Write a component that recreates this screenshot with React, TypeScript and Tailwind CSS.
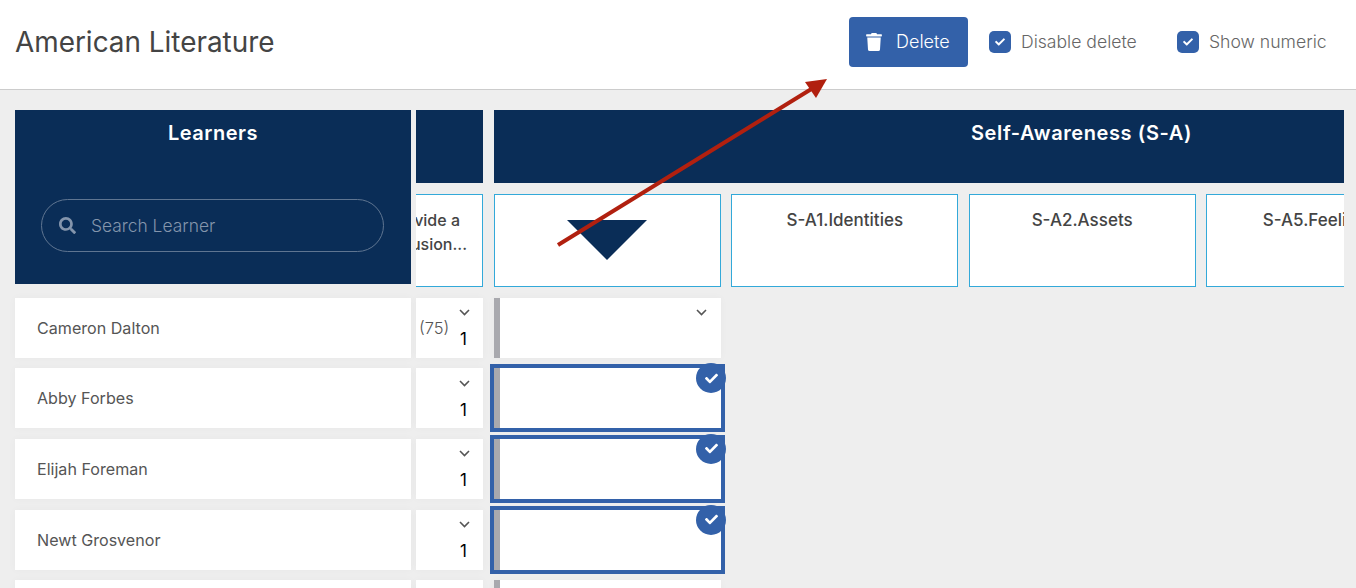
import { FaCheck, FaSearch, FaTrash } from 'react-icons/fa';

const learners = [
  { name: 'Cameron Dalton', score: '(75)', selected: false },
  { name: 'Abby Forbes', score: '', selected: true },
  { name: 'Elijah Foreman', score: '', selected: true },
  { name: 'Newt Grosvenor', score: '', selected: true },
  { name: '', score: '', selected: false },
];

const standards = ['S-A1.Identities', 'S-A2.Assets', 'S-A5.Feelings'];

function Chevron() {
  return (
    <svg width="11" height="7" viewBox="0 0 11 7" fill="none" stroke="#555" strokeWidth="1.6">
      <path d="M1 1l4.5 4.5L10 1" />
    </svg>
  );
}

function HeaderCheckbox({ label }: { label: string }) {
  return (
    <label className="mt-[1px] flex items-center gap-[10px]">
      <span className="flex h-[22px] w-[22px] items-center justify-center rounded-[5px] bg-[#3361a9] text-white">
        <FaCheck className="h-[10px] w-[10px]" />
      </span>
      <span className="w-[117px] text-[17.6px] font-light whitespace-nowrap text-[#666]">{label}</span>
    </label>
  );
}

export default function App() {
  return (
    <div className="relative h-[588px] w-[1356px] overflow-hidden bg-[#eeeeee] font-['Inter',sans-serif]">
      <header className="flex h-[90px] items-center justify-between border-b border-[#cccccc] bg-white pr-[30px] pb-[6px] pl-[15px]">
        <h1 className="mt-[2px] text-[27.9px] font-normal text-[#444]">American Literature</h1>
        <div className="flex items-center">
          <button className="flex h-[50px] w-[119px] items-center gap-[14px] rounded-[4px] bg-[#3361a9] pl-[17px] text-[18px] font-light text-white">
            <FaTrash className="h-[18px] w-[16px]" />
            Delete
          </button>
          <div className="ml-[21px] flex items-center gap-[39px]">
            <HeaderCheckbox label="Disable delete" />
            <HeaderCheckbox label="Show numeric" />
          </div>
        </div>
      </header>

      <div className="flex pt-5 pr-3 pl-[15px]">
        {/* Learners column */}
        <div className="w-[396px] shrink-0">
          <div className="h-[174px] bg-[#0a2d57] pt-[10px] text-center">
            <h2 className="text-[20px] leading-[27px] font-semibold tracking-[0.5px] text-white">Learners</h2>
            <div className="mt-[52px] ml-[26px] flex h-[53px] w-[343px] items-center gap-[15px] rounded-full border border-[#5f7591] pl-[17px] text-[#8495ac]">
              <FaSearch className="h-[17px] w-[17px]" />
              <span className="mt-[1px] text-[17.4px] font-light">Search Learner</span>
            </div>
          </div>
          <div className="mt-[13.8px] flex flex-col gap-[10.6px]">
            {learners.map((l, i) => (
              <div key={i} className="flex h-[60px] items-center bg-white pl-[22px] text-[16.1px] text-[#555] shadow-[0_0_8px_rgba(0,0,0,0.03)]">
                {l.name}
              </div>
            ))}
          </div>
        </div>

        {/* Clipped column */}
        <div className="ml-[5px] w-[67px] shrink-0">
          <div className="h-[73px] bg-[#0a2d57]" />
          <div className="mt-[11px] flex h-[93px] flex-col items-end overflow-hidden border border-l-0 border-[#33a9d9] bg-white pt-[13px] pr-[15px] text-[16px] leading-6 font-medium whitespace-nowrap text-[#444]">
            <span className="mr-[7px]">Provide a</span>
            <span>conclusion...</span>
          </div>
          <div className="mt-[10.8px] flex flex-col gap-[10.6px]">
            {learners.map((l, i) => (
              <div key={i} className="flex h-[60px] justify-between bg-white pr-[13px] pl-[3px] shadow-[0_0_8px_rgba(0,0,0,0.03)]">
                <span className="pt-[18px] text-[16.5px] font-light text-[#555]">{l.score}</span>
                {l.name && (
                  <div className="flex flex-col items-end pt-[11.5px]">
                    <Chevron />
                    <span className="mt-[11px] mr-[3px] text-[17px] leading-6 text-black">1</span>
                  </div>
                )}
              </div>
            ))}
          </div>
        </div>

        {/* Self-Awareness */}
        <div className="ml-[11px] min-w-0 flex-1">
          <div className="h-[73px] overflow-hidden bg-[#0a2d57]">
            <h2 className="w-[1175px] pt-[10px] text-center text-[20px] leading-[27px] font-semibold tracking-[0.6px] text-white">
              Self-Awareness (S-A)
            </h2>
          </div>
          <div className="mt-[11px] flex gap-[10.33px] overflow-hidden">
            <div className="flex h-[93px] w-[227px] shrink-0 justify-center border border-[#33a9d9] bg-white pt-[25px] pr-[1px]">
              <svg width="80" height="40" viewBox="0 0 80 40">
                <path d="M0 0h80L40 40z" fill="#0a2d57" />
              </svg>
            </div>
            {standards.map((s) => (
              <div key={s} className="h-[93px] w-[227px] shrink-0 border border-[#33a9d9] bg-white pt-[15px] text-center text-[17px] leading-5 font-medium whitespace-nowrap text-[#444]">
                {s}
              </div>
            ))}
          </div>
          <div className="mt-[10.8px] flex w-[227px] flex-col gap-[10.6px]">
            {learners.map((l, i) => (
              <div key={i} className={`relative flex h-[60px] w-[227px] justify-end bg-white pt-[11px] pr-[14px] shadow-[0_0_8px_rgba(0,0,0,0.03)] ${l.selected ? 'outline-4 outline-[#3361a9]' : ''}`}>
                <span className="absolute top-0 bottom-0 left-0 w-[6px] bg-[#a9a9ae]" />
                {i === 0 && <Chevron />}
                {l.selected && (
                  <span className="absolute top-[-5px] right-[-5px] flex h-[30px] w-[30px] items-center justify-center rounded-full bg-[#3361a9] text-white">
                    <FaCheck className="h-[13px] w-[13px]" />
                  </span>
                )}
              </div>
            ))}
          </div>
        </div>
      </div>

      {/* Annotation arrow */}
      <svg className="pointer-events-none absolute top-0 left-0" width="1356" height="588" viewBox="0 0 1356 588">
        <path d="M558 245L813 88" stroke="#b1200f" strokeWidth="4" fill="none" />
        <path d="M827 79L805 82L816 98z" fill="#b1200f" />
      </svg>
    </div>
  );
}
